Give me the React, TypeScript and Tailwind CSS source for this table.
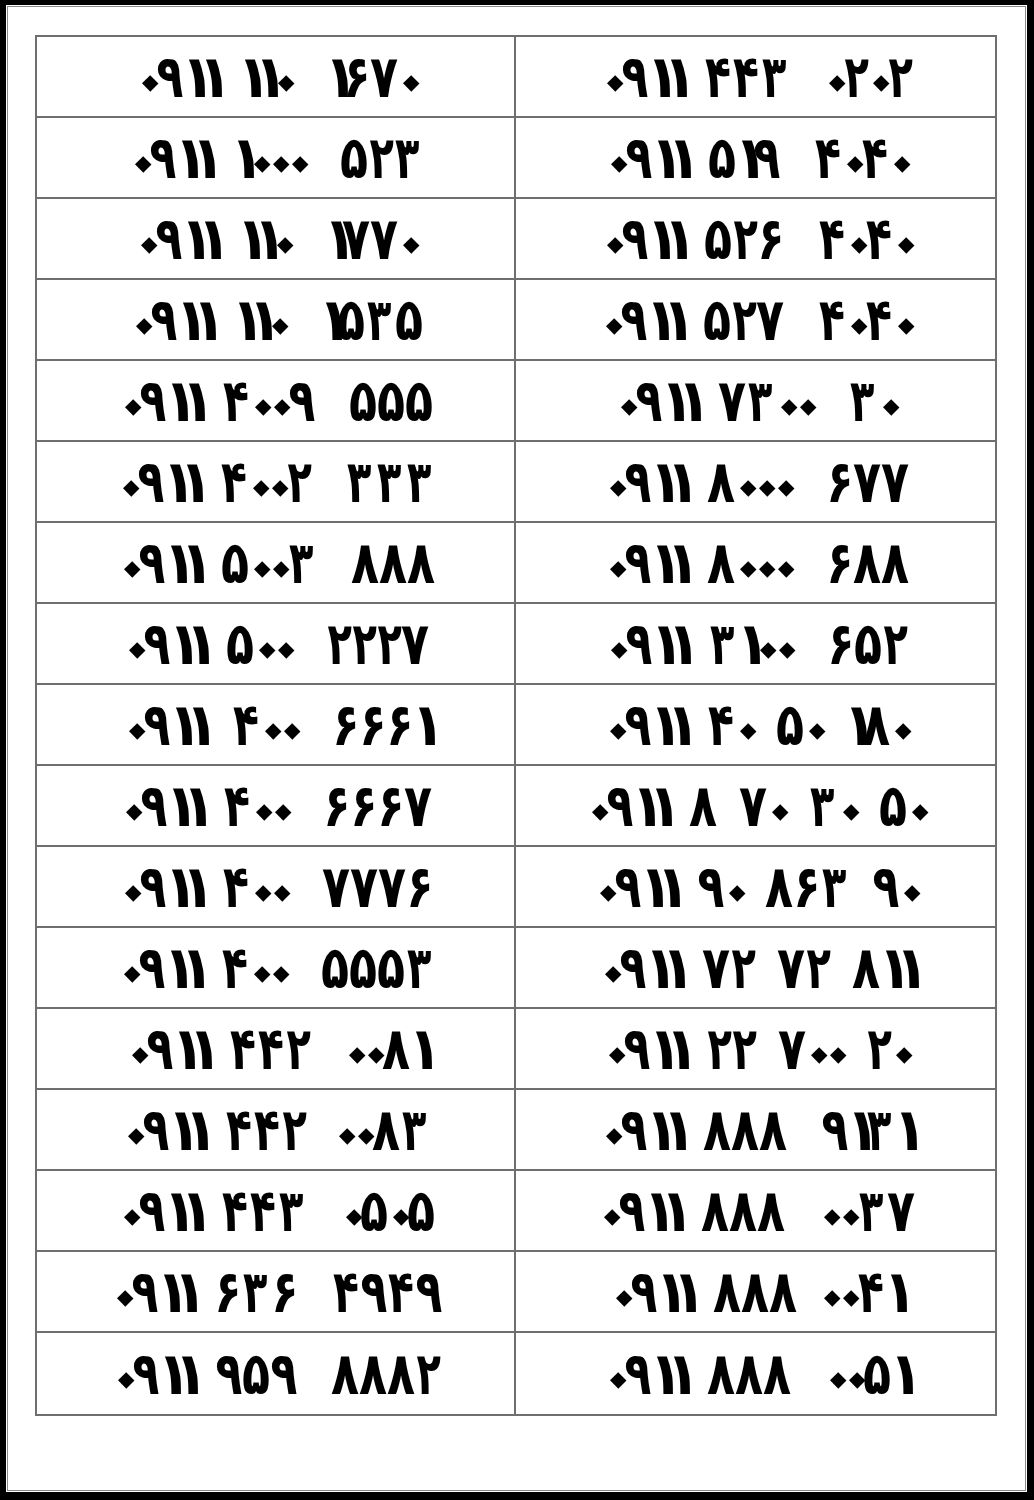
import React from "react";

const left = [
  "۰۹۱۱ ۱۱۰   ۱۶۷۰",
  "۰۹۱۱ ۱۰۰۰   ۵۲۳",
  "۰۹۱۱ ۱۱۰   ۱۷۷۰",
  "۰۹۱۱ ۱۱۰   ۱۵۳۵",
  "۰۹۱۱ ۴۰۰۹   ۵۵۵",
  "۰۹۱۱ ۴۰۰۲   ۳۳۳",
  "۰۹۱۱ ۵۰۰۳   ۸۸۸",
  "۰۹۱۱ ۵۰۰   ۲۲۲۷",
  "۰۹۱۱  ۴۰۰   ۶۶۶۱",
  "۰۹۱۱ ۴۰۰   ۶۶۶۷",
  "۰۹۱۱ ۴۰۰   ۷۷۷۶",
  "۰۹۱۱ ۴۰۰   ۵۵۵۳",
  "۰۹۱۱ ۴۴۲   ۰۰۸۱",
  "۰۹۱۱ ۴۴۲  ۰۰۸۳",
  "۰۹۱۱ ۴۴۳   ۰۵۰۵",
  "۰۹۱۱ ۶۳۶   ۴۹۴۹",
  "۰۹۱۱ ۹۵۹   ۸۸۸۲",
];

const right = [
  "۰۹۱۱ ۴۴۳   ۰۲۰۲",
  "۰۹۱۱ ۵۱۹   ۴۰۴۰",
  "۰۹۱۱ ۵۲۶   ۴۰۴۰",
  "۰۹۱۱ ۵۲۷   ۴۰۴۰",
  "۰۹۱۱ ۷۳۰۰   ۳۰",
  "۰۹۱۱ ۸۰۰۰   ۶۷۷",
  "۰۹۱۱ ۸۰۰۰   ۶۸۸",
  "۰۹۱۱ ۳۱۰۰   ۶۵۲",
  "۰۹۱۱ ۴۰ ۵۰ ۱۸۰",
  "۰۹۱۱ ۸ ۷۰ ۳۰ ۵۰",
  "۰۹۱۱ ۹۰ ۸۶۳ ۹۰",
  "۰۹۱۱ ۷۲ ۷۲ ۸۱۱",
  "۰۹۱۱ ۲۲ ۷۰۰ ۲۰",
  "۰۹۱۱ ۸۸۸   ۹۱۳۱",
  "۰۹۱۱ ۸۸۸   ۰۰۳۷",
  "۰۹۱۱ ۸۸۸ ۰۰۴۱",
  "۰۹۱۱ ۸۸۸   ۰۰۵۱",
];

const digitBox: Record<string, string> = {
  "۰": "w-[19px] leading-[10px] rotate-45 scale-[1.35] translate-x-[2px] -translate-y-[2px]",
  "۱": "w-[17px] scale-x-[1.1] scale-y-[1.18]",
  "۲": "w-[25px] scale-x-[0.8] scale-y-[1.18]",
  "۳": "w-[30px] scale-x-[0.8] scale-y-[1.18]",
  "۴": "w-[28px] scale-x-[0.85] scale-y-[1.18]",
  "۵": "w-[28px] scale-x-[0.92] scale-y-[1.18]",
  "۶": "w-[27px] scale-x-[0.88] scale-y-[1.18]",
  "۷": "w-[28px] scale-x-[0.92] scale-y-[1.18]",
  "۸": "w-[28px] scale-x-[0.92] scale-y-[1.18]",
  "۹": "w-[27px] scale-x-[0.88] scale-y-[1.18]",
};

const gapBox: Record<number, string> = {
  1: "w-[22px]",
  2: "w-[28px]",
  3: "w-[34px]",
};

function PhoneNumber({ text }: { text: string }) {
  const tokens = text.split(/( +)/).filter((t) => t.length > 0);
  return (
    <div dir="ltr" className="whitespace-nowrap">
      {tokens.map((tok, i) =>
        tok.trim() === "" ? (
          <span key={i} className={`inline-block ${gapBox[Math.min(tok.length, 3)]}`} />
        ) : (
          tok.split("").map((ch, j) => (
            <span
              key={i + "-" + j}
              className={`inline-block text-center ${digitBox[ch] ?? "w-[26px]"}`}
            >
              {ch}
            </span>
          ))
        )
      )}
    </div>
  );
}

function Cell({ text, last, isLeft }: { text: string; last: boolean; isLeft: boolean }) {
  return (
    <div
      className={`flex items-center justify-center text-black font-bold text-[50px] leading-none ${
        last ? "" : "border-b-2 border-[#6f6f6f]"
      } ${isLeft ? "border-r-2 border-r-[#6f6f6f]" : ""}`}
      style={{ fontFamily: '"DejaVu Sans", sans-serif' }}
    >
      <PhoneNumber text={text} />
    </div>
  );
}

export default function App() {
  return (
    <div className="w-[1034px] h-[1500px] bg-white border-black border-t-[5px] border-l-[6px] border-r-[7px] border-b-[8px] p-px">
      <div className="w-full h-full border border-[#8a8a8a] pl-[27px] pt-[28px]">
        <div className="w-[962px] h-[1381px] border-2 border-[#6f6f6f] grid grid-cols-2 grid-rows-[repeat(17,minmax(0,1fr))] grid-flow-col">
          {left.map((t, i) => (
            <Cell key={"l" + i} text={t} last={i === left.length - 1} isLeft />
          ))}
          {right.map((t, i) => (
            <Cell key={"r" + i} text={t} last={i === right.length - 1} isLeft={false} />
          ))}
        </div>
      </div>
    </div>
  );
}
